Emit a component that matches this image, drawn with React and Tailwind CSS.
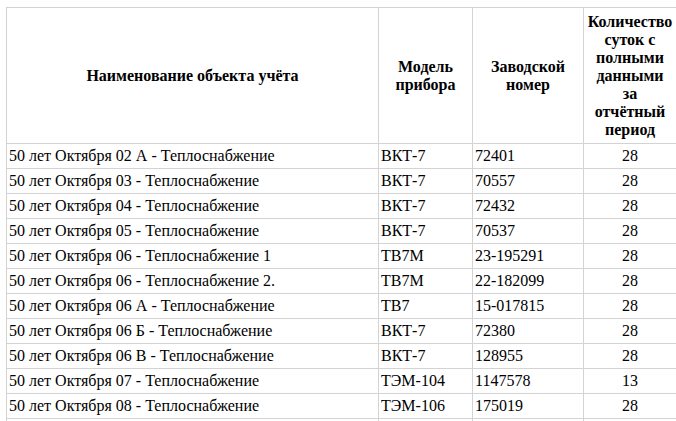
import React from 'react';

const rows = [
  ['50 лет Октября 02 А - Теплоснабжение', 'ВКТ-7', '72401', '28'],
  ['50 лет Октября 03 - Теплоснабжение', 'ВКТ-7', '70557', '28'],
  ['50 лет Октября 04 - Теплоснабжение', 'ВКТ-7', '72432', '28'],
  ['50 лет Октября 05 - Теплоснабжение', 'ВКТ-7', '70537', '28'],
  ['50 лет Октября 06 - Теплоснабжение 1', 'ТВ7М', '23-195291', '28'],
  ['50 лет Октября 06 - Теплоснабжение 2.', 'ТВ7М', '22-182099', '28'],
  ['50 лет Октября 06 А - Теплоснабжение', 'ТВ7', '15-017815', '28'],
  ['50 лет Октября 06 Б - Теплоснабжение', 'ВКТ-7', '72380', '28'],
  ['50 лет Октября 06 В - Теплоснабжение', 'ВКТ-7', '128955', '28'],
  ['50 лет Октября 07 - Теплоснабжение', 'ТЭМ-104', '1147578', '13'],
  ['50 лет Октября 08 - Теплоснабжение', 'ТЭМ-106', '175019', '28'],
];

export default function App() {
  const cell = 'border border-[#d3d3d3] px-[2px] py-[3px] leading-[18px]';
  return (
    <div className="h-[421px] w-[676px] overflow-hidden bg-white pl-[6px] pt-[7px] text-[16px] text-black font-[family-name:Liberation_Serif,Times_New_Roman,serif]">
      <table className="w-[670px] table-fixed border-collapse">
        <colgroup>
          <col className="w-[372px]" />
          <col className="w-[94px]" />
          <col className="w-[111px]" />
          <col className="w-[93px]" />
        </colgroup>
        <thead>
          <tr>
            <th className={`${cell} h-[136px] text-center align-middle font-bold`}>Наименование объекта учёта</th>
            <th className={`${cell} text-center align-middle font-bold`}>Модель прибора</th>
            <th className={`${cell} text-center align-middle font-bold`}>Заводской номер</th>
            <th className={`${cell} text-center align-middle font-bold`}>
              Количество<br />суток с<br />полными<br />данными<br />за<br />отчётный<br />период
            </th>
          </tr>
        </thead>
        <tbody>
          {rows.map((r, i) => (
            <tr key={i} className="h-[25px]">
              <td className={`${cell} whitespace-nowrap`}>{r[0]}</td>
              <td className={`${cell} whitespace-nowrap`}>{r[1]}</td>
              <td className={`${cell} whitespace-nowrap`}>{r[2]}</td>
              <td className={`${cell} text-center`}>{r[3]}</td>
            </tr>
          ))}
          <tr className="h-[25px]">
            <td className={cell}></td>
            <td className={cell}></td>
            <td className={cell}></td>
            <td className={cell}></td>
          </tr>
        </tbody>
      </table>
    </div>
  );
}
